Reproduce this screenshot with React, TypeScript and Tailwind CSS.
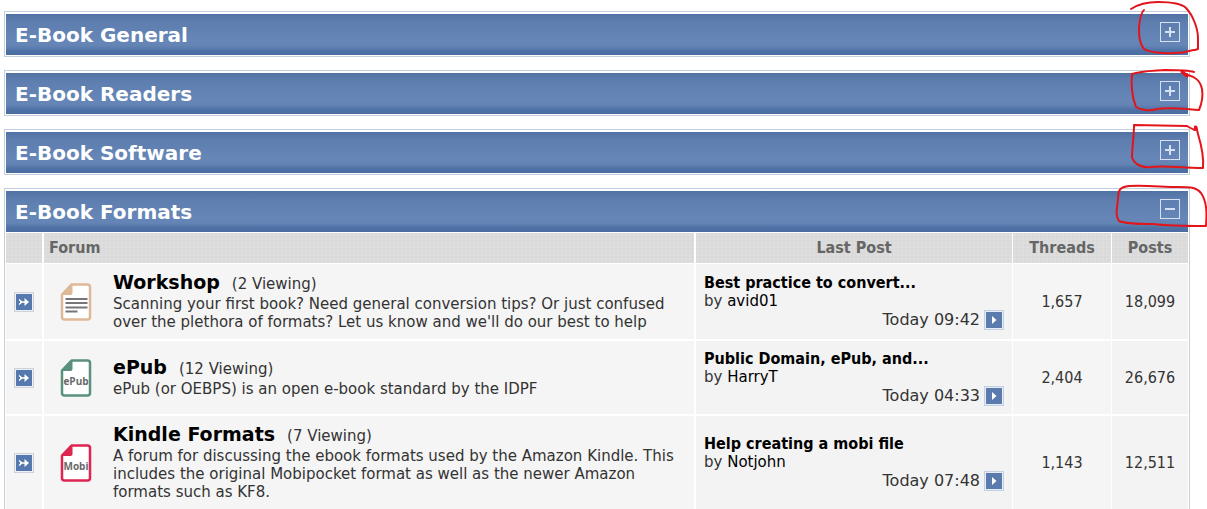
import { useState } from 'react'
import type { ReactNode } from 'react'

interface Forum {
    name: string
    viewing: number
    description: string
    icon: ReactNode
    lastPost: { title: string; author: string; time: string }
    threads: string
    posts: string
}

interface Category {
    title: string
    open: boolean
    forums: Forum[]
}

function FileIcon({ color, children }: { color: string; children: ReactNode }) {
    return (
        <svg width="32" height="38" viewBox="0 0 32 38" className="shrink-0" aria-hidden="true">
            <path
                d="M11.500 1.500H27.500Q30 1.500 30 4V34Q30 36.500 27.500 36.500H4.500Q2 36.500 2 34V11.500Z"
                fill="#fff"
                stroke={color}
                strokeWidth="2.500"
                strokeLinejoin="round"
            />
            <path d="M11 1.500L1.500 12H10.500Q12.500 12 12.500 10V1.500Z" fill={color} />
            {children}
        </svg>
    )
}

const workshopIcon = (
    <FileIcon color="#dfb896">
        <path d="M5.500 16H27.500M5.500 20H27.500M5.500 24.500H27.500M5.500 28.500H17.500" stroke="#77757a" strokeWidth="2" />
    </FileIcon>
)

const epubIcon = (
    <FileIcon color="#5a907c">
        <text x="16" y="26" textAnchor="middle" fontSize="10" fontWeight="700" fill="#67696b" className="font-['Open_Sans',sans-serif]">
            ePub
        </text>
    </FileIcon>
)

const mobiIcon = (
    <FileIcon color="#de2450">
        <text x="16" y="26" textAnchor="middle" fontSize="10" fontWeight="700" fill="#67696b" className="font-['Open_Sans',sans-serif]">
            Mobi
        </text>
    </FileIcon>
)

const categories: Category[] = [
    { title: 'E-Book General', open: false, forums: [] },
    { title: 'E-Book Readers', open: false, forums: [] },
    { title: 'E-Book Software', open: false, forums: [] },
    {
        title: 'E-Book Formats',
        open: true,
        forums: [
            {
                name: 'Workshop',
                viewing: 2,
                description:
                    "Scanning your first book? Need general conversion tips? Or just confused over the plethora of formats? Let us know and we'll do our best to help",
                icon: workshopIcon,
                lastPost: { title: 'Best practice to convert...', author: 'avid01', time: 'Today 09:42' },
                threads: '1,657',
                posts: '18,099',
            },
            {
                name: 'ePub',
                viewing: 12,
                description: 'ePub (or OEBPS) is an open e-book standard by the IDPF',
                icon: epubIcon,
                lastPost: { title: 'Public Domain, ePub, and...', author: 'HarryT', time: 'Today 04:33' },
                threads: '2,404',
                posts: '26,676',
            },
            {
                name: 'Kindle Formats',
                viewing: 7,
                description:
                    'A forum for discussing the ebook formats used by the Amazon Kindle. This includes the original Mobipocket format as well as the newer Amazon formats such as KF8.',
                icon: mobiIcon,
                lastPost: { title: 'Help creating a mobi file', author: 'Notjohn', time: 'Today 07:48' },
                threads: '1,143',
                posts: '12,511',
            },
        ],
    },
]

function StatusIcon() {
    return (
        <svg width="20" height="20" viewBox="0 0 20 20" className="mx-auto block" aria-hidden="true">
            <rect x="0.500" y="0.500" width="19" height="19" fill="#edf1f6" stroke="#cdd2da" />
            <rect x="2" y="2" width="16" height="16" fill="#5579ae" />
            <path d="M5 7.500L8 10L5 12.500M6 10H13" fill="none" stroke="#fff" strokeWidth="1.300" />
            <path d="M10.500 6L15 10L10.500 14Z" fill="#fff" />
        </svg>
    )
}

function GoIcon() {
    return (
        <svg width="20" height="20" viewBox="0 0 20 20" className="block" aria-hidden="true">
            <rect x="0.500" y="0.500" width="19" height="19" fill="#e6edf6" stroke="#c3d0e2" />
            <rect x="2" y="2" width="16" height="16" fill="#5b7bae" />
            <path d="M8 6L12.500 10L8 14Z" fill="#fff" />
        </svg>
    )
}

function ForumRow({ forum }: { forum: Forum }) {
    return (
        <tr className="text-[#333]">
            <td className="border-r-2 border-b-2 border-white bg-[#f5f5f5]">
                <StatusIcon />
            </td>
            <td className="border-r-2 border-b-2 border-white bg-[#f5f5f5] py-2 pr-4 pl-4">
                <div className="flex items-center gap-[21px]">
                    {forum.icon}
                    <div>
                        <div className="flex items-baseline gap-3 leading-[21px]">
                            <a href="#" className="text-[19px] font-bold text-black">{forum.name}</a>
                            <span>({forum.viewing} Viewing)</span>
                        </div>
                        <p>{forum.description}</p>
                    </div>
                </div>
            </td>
            <td className="border-r border-b-2 border-white bg-[#f3f3f3] px-2 pt-[9px] pb-2">
                <a href="#" className="block text-base leading-[18px] font-bold text-black font-['DejaVu_Sans_Condensed','DejaVu_Sans',sans-serif]">
                    {forum.lastPost.title}
                </a>
                <div>
                    by <a href="#" className="text-black">{forum.lastPost.author}</a>
                </div>
                <div className="flex items-center justify-end gap-1 text-base leading-[18px]">
                    {forum.lastPost.time}
                    <a href="#" aria-label="Go to last post">
                        <GoIcon />
                    </a>
                </div>
            </td>
            <td className="border-r border-b-2 border-white bg-[#f5f5f5] text-center text-base font-['DejaVu_Sans_Condensed','DejaVu_Sans',sans-serif]">
                {forum.threads}
            </td>
            <td className="border-b-2 border-white bg-[#f3f3f3] text-center text-base font-['DejaVu_Sans_Condensed','DejaVu_Sans',sans-serif]">
                {forum.posts}
            </td>
        </tr>
    )
}

function ForumTable({ forums }: { forums: Forum[] }) {
    return (
        <table className="w-full table-fixed border-separate border-spacing-0 text-[15px] leading-[18px]">
            <thead className="text-base leading-[30px] text-[#666] font-['DejaVu_Sans_Condensed','DejaVu_Sans',sans-serif]">
                <tr className="*:border-y *:border-white *:bg-[#d9d9d9] *:bg-[radial-gradient(#dfdfdf_1px,transparent_2px)] *:bg-size-[4px_4px] *:p-0">
                    <th className="w-[38px] border-r-2" aria-label="Status" />
                    <th className="border-r-2 text-left">
                        <span className="px-[5px]">Forum</span>
                    </th>
                    <th className="w-[317px] border-r">Last Post</th>
                    <th className="w-[99px] border-r">Threads</th>
                    <th className="w-[76px]">Posts</th>
                </tr>
            </thead>
            <tbody>
                {forums.map((forum) => (
                    <ForumRow key={forum.name} forum={forum} />
                ))}
            </tbody>
        </table>
    )
}

function CategoryPanel({ category }: { category: Category }) {
    const [open, setOpen] = useState(category.open)

    return (
        <section className="border border-[#c3cfdc] px-px pt-0.5 pb-px last:border-b-0 last:pb-0">
            <header className="flex h-[41px] items-center justify-between bg-[linear-gradient(#4f72a4_0%,#5777a8_8%,#5d7eae_20%,#6586b7_65%,#6384b4_78%,#4e71a5_90%,#4b6da1_100%)] pr-2 pl-[9px]">
                <h2 className="text-[20px] font-bold text-white">{category.title}</h2>
                <button
                    type="button"
                    className="mt-2 self-start"
                    aria-label={`Toggle ${category.title}`}
                    aria-expanded={open}
                    onClick={() => setOpen(!open)}
                >
                    <svg width="20" height="20" viewBox="0 0 20 20" className="block" fill="none" stroke="#d5e0f0">
                        <rect x="0.500" y="0.500" width="19" height="19" />
                        <path d={open ? 'M5 10H15' : 'M5 10H15M10 5V15'} strokeWidth="2" />
                    </svg>
                </button>
            </header>
            {open && <ForumTable forums={category.forums} />}
        </section>
    )
}

// Hand-drawn pen circles round the toggle buttons
function PenMarks() {
    return (
        <svg
            width="107"
            height="235"
            viewBox="0 0 107 235"
            className="pointer-events-none absolute top-0 right-0"
            fill="none"
            stroke="#e3151b"
            strokeWidth="2"
            strokeLinecap="round"
            strokeLinejoin="round"
            aria-hidden="true"
        >
            <path d="M31 9C37 5 47 2 58 2C70 2 81 3 86 8C93 15 98 29 98 38L98 49L95 50C91 49 89 53 75 53C62 54 49 52 44 49C39 43 39 35 39 27C40 18 41 12 44 10" />
            <path d="M94 72C88 70 76 70 65 70C52 71 41 71 32 74C31 85 32 97 36 107C42 111 51 111 57 109C69 107 84 109 99 110C102 103 103 95 102 89C100 80 95 77 88 75L81 71" />
            <path d="M82 72L87 76" strokeWidth="3" />
            <path d="M87 126L34 125C34 137 32 148 32 157C34 164 41 168 51 167C65 165 80 168 103 168C104 156 101 144 98 134L97 130C97 126 94 125 95 129C96 131 94 130 87 126" />
            <path d="M106 226C88 226 69 226 53 224C38 224 26 224 19 221C15 216 17 209 18 199C18 190 20 187 29 186C46 185 63 187 78 187C90 187 96 187 101 193C107 202 107 213 106 226" />
        </svg>
    )
}

export default function App() {
    return (
        <div className="relative bg-white pt-[11px] pr-[17px] pl-1 font-['DejaVu_Sans',Verdana,sans-serif]">
            <main className="flex flex-col gap-[13px]">
                {categories.map((category) => (
                    <CategoryPanel key={category.title} category={category} />
                ))}
            </main>
            <PenMarks />
        </div>
    )
}
